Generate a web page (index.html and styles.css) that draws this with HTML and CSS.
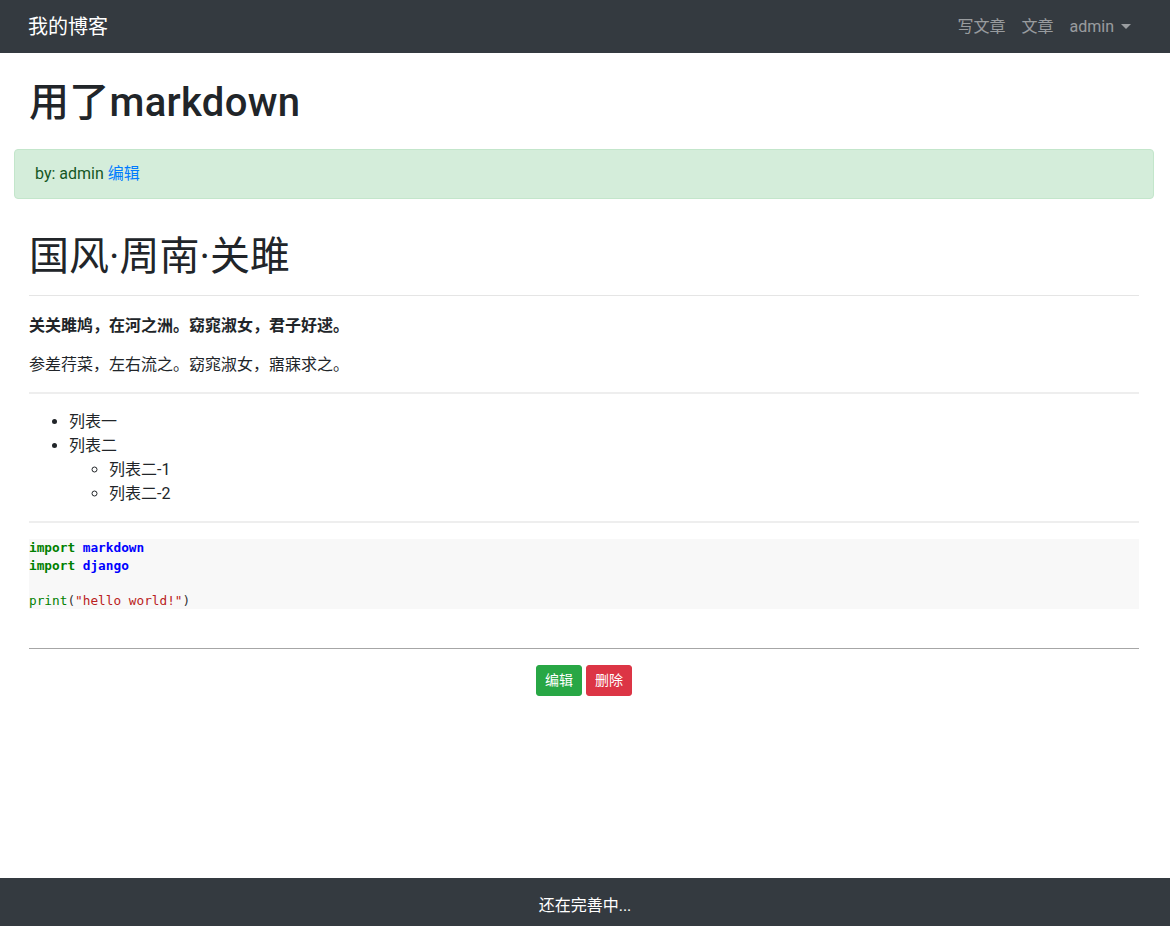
FILE: index.html
```html
<!DOCTYPE html>
<html lang="zh-CN">
<head>
<meta charset="utf-8">
<title>用了markdown</title>
<link rel="stylesheet" href="styles.css">
</head>
<body>
<nav class="navbar">
  <a class="brand" href="#">我的博客</a>
  <ul class="nav">
    <li><a class="nav-link" href="#">写文章</a></li>
    <li><a class="nav-link" href="#">文章</a></li>
    <li><a class="nav-link dropdown" href="#">admin<span class="caret"></span></a></li>
  </ul>
</nav>

<main class="container">
  <h1 class="post-title">用了markdown</h1>
  <div class="alert">by: admin <a href="#" class="link">编辑</a></div>

  <article class="markdown">
    <h1>国风·周南·关雎</h1>
    <p><strong>关关雎鸠，在河之洲。窈窕淑女，君子好逑。</strong></p>
    <p>参差荇菜，左右流之。窈窕淑女，寤寐求之。</p>
    <hr>
    <ul>
      <li>列表一</li>
      <li>列表二
        <ul>
          <li>列表二-1</li>
          <li>列表二-2</li>
        </ul>
      </li>
    </ul>
    <hr>
    <div class="codehilite"><pre><span class="kn">import</span> <span class="nn">markdown</span>
<span class="kn">import</span> <span class="nn">django</span>

<span class="nb">print</span><span class="p">(</span><span class="s2">"hello world!"</span><span class="p">)</span>
</pre></div>
  </article>

  <hr class="sep">
  <div class="actions">
    <a href="#" class="btn btn-success">编辑</a>
    <a href="#" class="btn btn-danger">删除</a>
  </div>
</main>

<footer class="footer">还在完善中...</footer>
</body>
</html>
```

FILE: styles.css
```css
* { box-sizing: border-box; }

html, body { margin: 0; padding: 0; }

body {
  font-family: Roboto, "Noto Sans CJK SC", sans-serif;
  font-size: 16px;
  line-height: 1.5;
  color: #212529;
  background: #fff;
  min-height: 100vh;
  display: flex;
  flex-direction: column;
}

a { text-decoration: none; }

/* navbar */
.navbar {
  height: 53px;
  background: #343a40;
  display: flex;
  align-items: center;
  justify-content: space-between;
  padding: 0 31px 0 28px;
}
.brand {
  color: #fff;
  font-size: 20px;
  line-height: 30px;
}
.nav {
  list-style: none;
  margin: 0;
  padding: 0;
  display: flex;
}
.nav-link {
  display: block;
  padding: 0 8px;
  color: rgba(255, 255, 255, 0.5);
  line-height: 24px;
}
.caret {
  display: inline-block;
  margin-left: 7px;
  vertical-align: 3px;
  border-top: 5px solid;
  border-left: 5px solid transparent;
  border-right: 5px solid transparent;
}

/* content */
.container {
  flex: 1;
  padding: 0 16px 0 14px;
}
.post-title {
  margin: 26px 15px 22px;
  font-size: 40px;
  font-weight: 500;
  line-height: 48px;
  letter-spacing: 0.3px;
}
.alert {
  height: 50px;
  padding: 12px 20px;
  background: #d4edda;
  border: 1px solid #c3e6cb;
  border-radius: 4px;
  color: #155724;
}
.link { color: #007bff; }

.markdown {
  padding: 0 15px;
}
.markdown h1 {
  margin: 33px 0 0;
  padding-bottom: 13px;
  font-size: 40px;
  font-weight: 400;
  line-height: 50px;
  border-bottom: 1px solid #e5e5e5;
}
.markdown p { margin: 0 0 15px; }
.markdown h1 + p { margin-top: 18px; }
.markdown strong { font-weight: 700; }
.markdown hr {
  margin: 15px 0 16px;
  border: 0;
  border-top: 2px solid #eeeeee;
  height: 0;
}
.markdown ul {
  margin: 0;
  padding-left: 40px;
  list-style: disc;
}
.markdown ul ul { list-style: circle; }
.markdown > ul { margin-bottom: 14px; }

.codehilite {
  background: #f8f8f8;
}
.codehilite pre {
  margin: 0;
  font-family: "DejaVu Sans Mono", "Liberation Mono", monospace;
  font-size: 12.75px;
  line-height: 17.5px;
  color: #212529;
  height: 70px;
}
.kn { color: #008000; font-weight: 700; }
.nn { color: #0000ff; font-weight: 700; }
.nb { color: #008000; }
.s2 { color: #ba2121; }
.p  { color: #333; }

.sep {
  margin: 39px 15px 16px;
  border: 0;
  border-top: 1px solid #a6a6a6;
  height: 0;
}
.actions {
  display: flex;
  justify-content: center;
  gap: 4px;
}
.btn {
  display: inline-block;
  padding: 4px 8px;
  font-size: 14px;
  line-height: 21px;
  color: #fff;
  border: 1px solid transparent;
  border-radius: 3px;
}
.btn-success { background: #28a745; border-color: #28a745; }
.btn-danger  { background: #dc3545; border-color: #dc3545; }

/* footer */
.footer {
  height: 48px;
  padding-top: 16px;
  background: #343a40;
  color: #fff;
  text-align: center;
  line-height: 24px;
}
```
